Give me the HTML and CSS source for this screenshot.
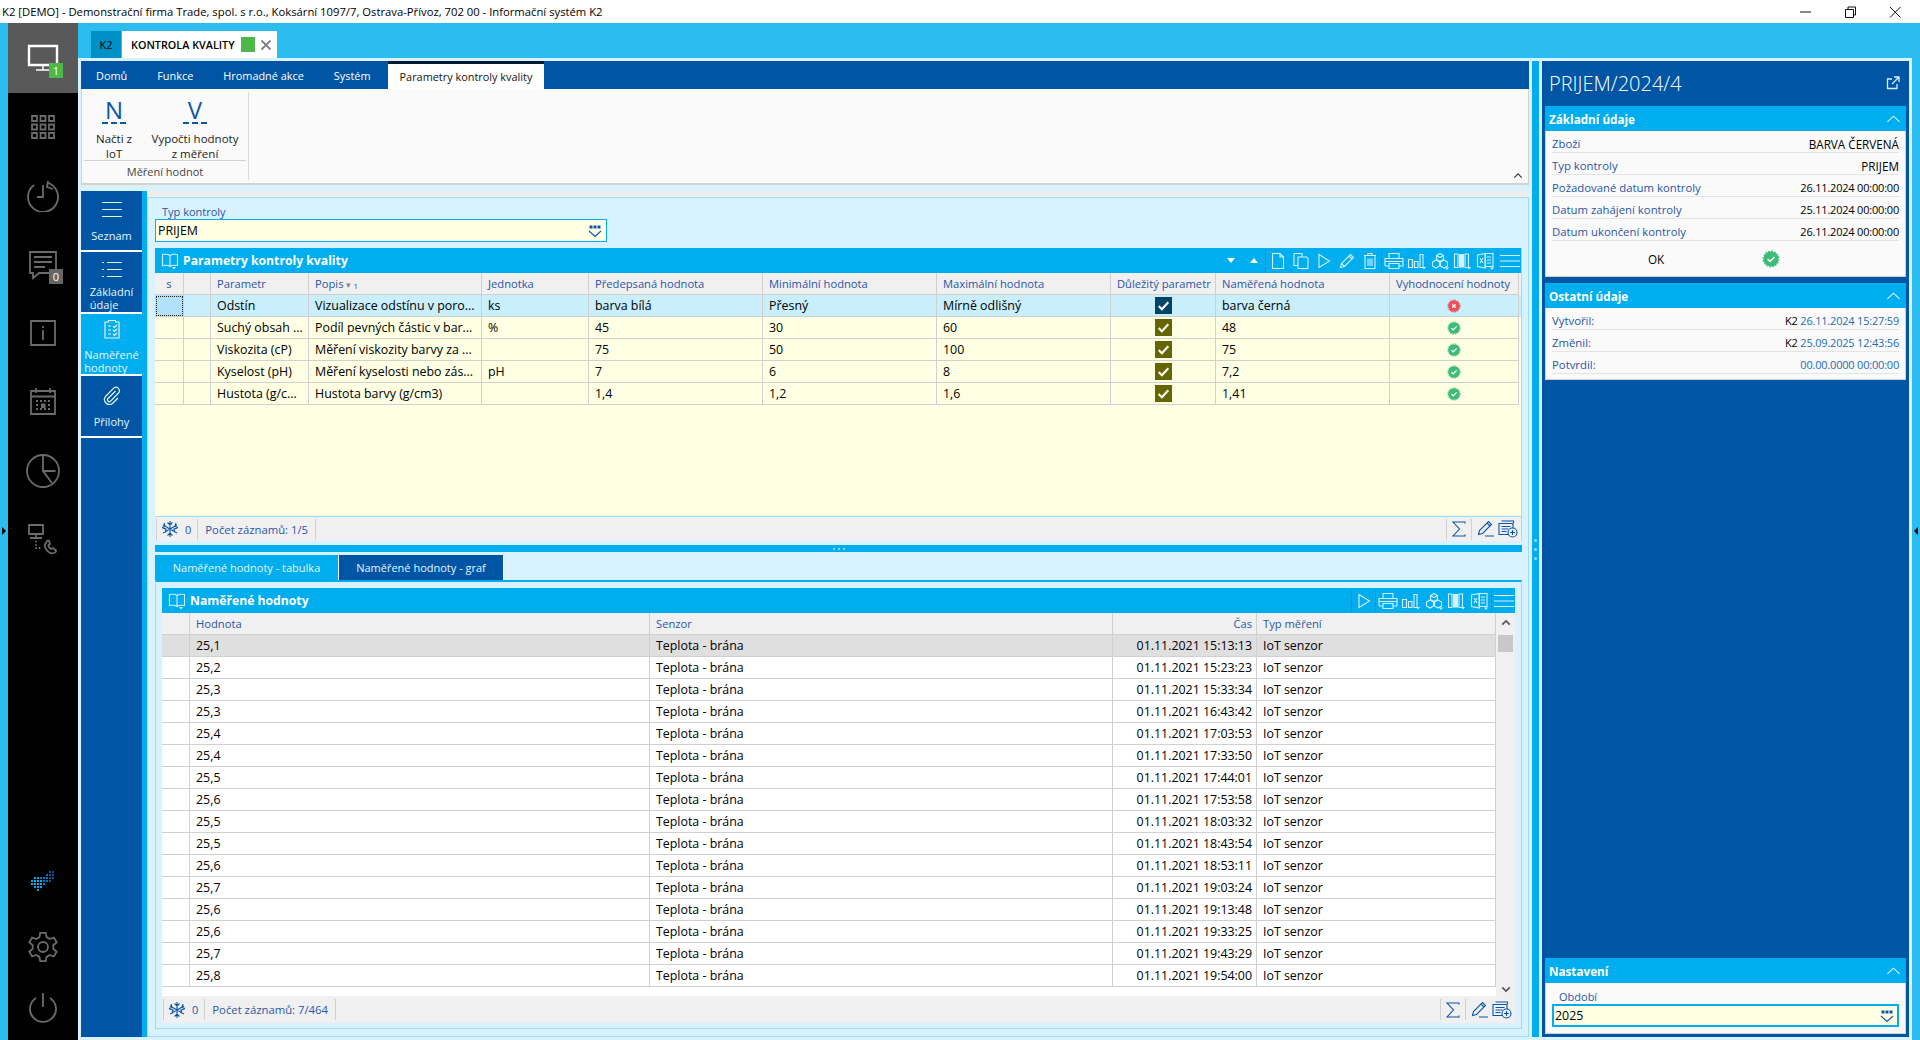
FILE: index.html
```html
<!DOCTYPE html>
<html lang="cs">
<head>
<meta charset="utf-8">
<title>K2</title>
<link rel="stylesheet" href="styles.css">
</head>
<body>
<svg class="defs" aria-hidden="true">
  <symbol id="i-doc" viewBox="0 0 18 18"><path d="M3.500 1.500h7.500l3.500 3.500v11.500h-11zM11 1.500v3.500h3.500"/></symbol>
  <symbol id="i-copy" viewBox="0 0 18 18"><path d="M6 13.500H2V1.500h8v3.500"/><path d="M6 5h8.500l1.500 1.500v10H6z"/></symbol>
  <symbol id="i-play" viewBox="0 0 18 18"><path d="M4 2.500l10.500 6.500L4 15.500z"/></symbol>
  <symbol id="i-pencil" viewBox="0 0 18 18"><path d="M2.500 15.500l1-4L12.500 2.500l3 3-9 9zM11 4l3 3M3.500 11.500l3 3"/></symbol>
  <symbol id="i-trash" viewBox="0 0 18 18"><path d="M3 3.500h12M7 3.500v-2h4v2M4 3.500v13h10v-13M7 6.500v7.500M9 6.500v7.500M11 6.500v7.500"/></symbol>
  <symbol id="i-print" viewBox="0 0 20 18"><path d="M5 6V1.500h10V6M1 14V6.500h18V14h-4M5 14H1M1 9.500h18"/><path d="M5 11.500h10v5H5z"/></symbol>
  <symbol id="i-chart" viewBox="0 0 20 18"><path d="M1.500 7.500h4v8h-4zM7.500 9.500h3.500v6h-3.500zM13 2.500h3v13h-3z"/><path class="solid" d="M15 15h4l-2 2.500z"/></symbol>
  <symbol id="i-cubes" viewBox="0 0 20 18"><path d="M10 1.500l3.500 2v4l-3.500 2-3.500-2v-4zM6 8l3.500 2v4L6 16l-3.500-2v-4zM14 8l3.500 2v4L14 16l-3.500-2v-4zM6.500 3.500l3.500 2 3.500-2"/><path class="solid" d="M15 15.500h4l-2 2.500z"/></symbol>
  <symbol id="i-cols" viewBox="0 0 20 18"><path d="M1.500 2h3.500v13.500H1.500zM12 2h3.500v13.500H12z"/><path class="solid" d="M6 2h5v13.500H6z"/><path class="solid" d="M14 15h4l-2 2.500z"/></symbol>
  <symbol id="i-excel" viewBox="0 0 20 18"><path d="M9 1.500h8v13H9zM11 5h4M11 8h4M11 11h4"/><path d="M1.500 3l8-1.500v14.500l-8-1.500zM4 6l3 5M7 6l-3 5"/><path class="solid" d="M14 15.500h4l-2 2.500z"/></symbol>
  <symbol id="i-menu" viewBox="0 0 20 18"><path d="M0 3.500h20M0 9h20M0 14.500h20"/></symbol>
  <symbol id="i-book" viewBox="0 0 18 18"><path d="M9 3.500C7 2 4 2 1.500 2.500v11C4 13 7 13 9 14.500 11 13 14 13 16.500 13.500v-11C14 2 11 2 9 3.500zM9 3.500v11"/><path class="solid" d="M11 15h4l-2 2.500z"/></symbol>
  <symbol id="i-snow" viewBox="0 0 18 18"><path d="M9 1v16M2 5l14 8M16 5L2 13M6.500 2.500L9 5l2.500-2.500M6.500 15.500L9 13l2.500 2.500M1.500 8l3.500 1-1 3.500M16.500 8L13 9l1 3.500M3 3l1 3.500L1 7.500M15 3l-1 3.500 3 1"/></symbol>
  <symbol id="i-sigma" viewBox="0 0 18 18"><path d="M15 3.500V2H3l6.500 7L3 16h12v-1.500"/></symbol>
  <symbol id="i-edit" viewBox="0 0 18 18"><path d="M1.500 14.500l1-4L11.500 1.500l3 3-9 9zM10 3l3 3M8 16h9"/></symbol>
  <symbol id="i-add" viewBox="0 0 20 18"><path d="M3.500 1h12v2M1 3.500h14v11H1zM3.500 6.500h9M3.500 9h7M3.500 11.500h5"/><circle class="white" cx="14.500" cy="12.500" r="4.500"/><path d="M14.500 10v5M12 12.500h5"/></symbol>
  <symbol id="i-ok" viewBox="0 0 16 16"><circle class="okfill" cx="8" cy="8" r="6.700"/><circle class="okteeth" cx="8" cy="8" r="7"/><path class="mark" d="M5 8.200l2.100 2L11 6.200"/></symbol>
  <symbol id="i-bad" viewBox="0 0 16 16"><circle class="badfill" cx="8" cy="8" r="6.700"/><circle class="badteeth" cx="8" cy="8" r="7"/><path class="mark" d="M6 6l4 4M10 6l-4 4"/></symbol>
  <symbol id="i-check" viewBox="0 0 16 16"><path class="mark big" d="M3.500 8.500l3 3 6-6.500"/></symbol>
  <symbol id="i-combo" viewBox="0 0 14 14"><path class="solid" d="M1.500 1.500h3v3h-3zM5.500 1.500h3v3h-3zM9.500 1.500h3v3h-3z"/><path d="M1 7l6 5.500L13 7"/></symbol>
</svg>

<header class="titlebar">
  <span class="title">K2 [DEMO] - Demonstrační firma Trade, spol. s r.o., Koksární 1097/7, Ostrava-Přívoz, 702 00 - Informační systém K2</span>
  <div class="winctl">
    <svg class="w" viewBox="0 0 14 14"><path d="M2 7h11"/></svg>
    <svg class="w" viewBox="0 0 14 14"><path d="M2.500 4.500h8v8h-8zM5 4.500V2h7.500v8h-2"/></svg>
    <svg class="w" viewBox="0 0 14 14"><path d="M2 2l10.500 10.500M12.500 2L2 12.500"/></svg>
  </div>
</header>

<div class="app">
  <span class="edge-arrow left"></span>
  <span class="edge-arrow right"></span>
  <aside class="rail">
    <div class="rail-active">
      <svg class="rail-ico white-ico" viewBox="0 0 32 32"><path d="M2 5h28v19H2zM16 24v5M9 29h14"/><path class="thick" d="M2 5h28v19H2z"/></svg>
      <span class="badge green">1</span>
    </div>
    <div class="rail-slot"><svg class="rail-ico" viewBox="0 0 32 32"><path d="M5 5h5v5H5zM13.500 5h5v5h-5zM22 5h5v5h-5zM5 13.500h5v5H5zM13.500 13.500h5v5h-5zM22 13.500h5v5h-5zM5 22h5v5H5zM13.500 22h5v5h-5zM22 22h5v5h-5z"/></svg></div>
    <div class="rail-slot"><svg class="rail-ico" viewBox="0 0 32 32"><path d="M20 2.500A15 15 0 1 1 7 5M16 5v12h-6M21 1l-1 6 6 2" /></svg></div>
    <div class="rail-slot"><svg class="rail-ico" viewBox="0 0 32 32"><path d="M3 3h26v21H12l-6 5v-5H3zM7 8h18M7 13h18M7 18h11"/></svg><span class="badge grey">0</span></div>
    <div class="rail-slot"><svg class="rail-ico" viewBox="0 0 32 32"><path d="M4 4h24v24H4zM16 13v10M16 9v2"/></svg></div>
    <div class="rail-slot"><svg class="rail-ico" viewBox="0 0 32 32"><path d="M4 5h24v23H4zM4 10.500h24M9 2v5M23 2v5M9 15h2M13 15h2M17 15h2M21 15h2M9 19h2M21 19h2M9 23h2M13 23h2M17 23h2M21 23h2"/><path class="solid" d="M14 17.500h4.500V22H14z"/></svg></div>
    <div class="rail-slot"><svg class="rail-ico big" viewBox="0 0 36 36"><circle cx="18" cy="18" r="16"/><path d="M18 2v16l12.500 0M18 18l9 12"/></svg></div>
    <div class="rail-slot"><svg class="rail-ico" viewBox="0 -1 32 32"><path d="M2 1h14v9H2zM9 10v4M3 14h12"/><path class="dots" d="M9 17v7h6"/><path d="M19 19c-1.500 1-2 3 0 6s5 5 8 4c2-.7 2.500-2 1.500-3l-2.500-2-2 1c-1-.5-2.500-2.500-2.500-4l1.500-1-1-3c-1-1-2-.5-3 2z" /></svg></div>
    <div class="rail-fill"></div>
    <div class="rail-logo">
      <svg class="logo" viewBox="0 0 24 22">
        <path class="d1" d="M0 9h2v2H0zM3 6h2v2H3zM3 9h2v2H3zM3 12h2v2H3zM0 12h2v2H0zM3 15h2v2H3zM6 6h2v2H6zM6 9h2v2H6zM6 12h2v2H6zM6 15h2v2H6zM6 18h2v2H6zM9 9h2v2H9zM9 12h2v2H9zM9 15h2v2H9z"/>
        <path class="d2" d="M9 6h2v2H9zM12 6h2v2h-2zM12 9h2v2h-2zM12 12h2v2h-2zM15 3h2v2h-2zM15 6h2v2h-2zM15 9h2v2h-2z"/>
        <path class="d3" d="M18 0h2v2h-2zM18 3h2v2h-2zM18 6h2v2h-2zM18 9h2v2h-2zM21 0h2v2h-2zM21 3h2v2h-2zM21 6h2v2h-2z"/>
      </svg>
    </div>
    <div class="rail-slot low"><svg class="rail-ico" viewBox="0 0 32 32"><path d="M19.600 6.100L18.800 1.800H13.200L12.400 6.100L9.300 8L5.100 6.500L2.300 11.300L5.700 14.200V17.800L2.300 20.700L5.100 25.500L9.300 24L12.400 25.900L13.200 30.200H18.800L19.600 25.900L22.700 24L26.900 25.500L29.700 20.700L26.300 17.800V14.200L29.700 11.300L26.900 6.500L22.700 8z"/><circle cx="16" cy="16" r="5"/></svg></div>
    <div class="rail-slot low"><svg class="rail-ico" viewBox="0 0 32 32"><path d="M9 6a13 13 0 1 0 14 0M16 1v14"/></svg></div>
  </aside>

  <div class="desk">
    <div class="tabstrip">
      <span class="tab-k2">K2</span>
      <div class="tab-doc">
        <span class="tab-name">KONTROLA KVALITY</span>
        <span class="tab-state"></span>
        <svg class="tab-close" viewBox="0 0 12 12"><path d="M1.500 1.500l9 9M10.500 1.500l-9 9"/></svg>
      </div>
    </div>

    <div class="workspace">
      <main class="main">
        <nav class="rtabs">
          <span class="rtab">Domů</span>
          <span class="rtab">Funkce</span>
          <span class="rtab">Hromadné akce</span>
          <span class="rtab">Systém</span>
          <span class="rtab active">Parametry kontroly kvality</span>
        </nav>
        <section class="ribbon">
          <div class="rgroup">
            <div class="rbtns">
              <div class="rbtn narrow"><span class="rletter">N</span><span class="rlabel">Načti z<br>IoT</span></div>
              <div class="rbtn wide"><span class="rletter">V</span><span class="rlabel">Vypočti hodnoty<br>z měření</span></div>
            </div>
            <div class="rgroup-name">Měření hodnot</div>
          </div>
          <svg class="ribbon-caret" viewBox="0 0 12 8"><path d="M1.500 6.500L6 2l4.500 4.500"/></svg>
        </section>

        <div class="body">
          <nav class="sidenav">
            <div class="nitem list">
              <svg class="nico" viewBox="0 0 22 20"><path d="M1 2.500h20M1 9.500h20M1 16.500h20"/></svg>
              <span class="nlabel">Seznam</span>
            </div>
            <div class="nitem basic">
              <svg class="nico" viewBox="0 0 22 20"><path d="M6 2.500h15M6 9.500h15M6 16.500h15M1 2.500h2M1 9.500h2M1 16.500h2"/></svg>
              <span class="nlabel">Základní<br>údaje</span>
            </div>
            <div class="nitem on">
              <svg class="nico" viewBox="0 0 22 20"><path d="M4 3h3.500V1.500h7V3H18v16H4zM7 7h3M7 11h3M7 15h3M12 7l1.500 1.500L16 6M12 11l1.500 1.500L16 10M12 15l1.500 1.500L16 14"/></svg>
              <span class="nlabel">Naměřené<br>hodnoty</span>
            </div>
            <div class="nitem clip">
              <svg class="nico" viewBox="0 0 22 20"><path d="M14.500 6L7 13.500a1.800 1.800 0 0 0 2.600 2.600L17.500 8a3.400 3.400 0 0 0-4.800-4.800L4.500 11.500a5 5 0 0 0 7 7L17 13"/></svg>
              <span class="nlabel">Přílohy</span>
            </div>
          </nav>
          <div class="navedge"></div>

          <div class="content">
            <div class="pane">
              <label class="flabel">Typ kontroly</label>
              <div class="combo main-combo"><span>PRIJEM</span><svg class="combo-ico" viewBox="0 0 14 14"><use href="#i-combo"/></svg></div>

              <section class="grid top">
                <div class="gbar">
                  <svg class="bookico tb"><use href="#i-book"/></svg>
                  <span class="gtitle">Parametry kontroly kvality</span>
                  <div class="tools">
                    <span class="tri down"></span>
                    <span class="tri up"></span>
                    <span class="tsep"></span>
                    <svg class="tb"><use href="#i-doc"/></svg>
                    <svg class="tb"><use href="#i-copy"/></svg>
                    <svg class="tb"><use href="#i-play"/></svg>
                    <svg class="tb"><use href="#i-pencil"/></svg>
                    <svg class="tb"><use href="#i-trash"/></svg>
                    <span class="tsep"></span>
                    <svg class="tb w20"><use href="#i-print"/></svg>
                    <svg class="tb w20"><use href="#i-chart"/></svg>
                    <svg class="tb w20"><use href="#i-cubes"/></svg>
                    <svg class="tb w20"><use href="#i-cols"/></svg>
                    <svg class="tb w20"><use href="#i-excel"/></svg>
                    <span class="tsep"></span>
                    <svg class="tb w20"><use href="#i-menu"/></svg>
                  </div>
                </div>
                <div class="gtable yellow">
                  <div class="row head c1">
                    <span class="center">s</span><span></span><span>Parametr</span><span>Popis <i class="sort">▾</i><i class="sortn">1</i></span><span>Jednotka</span><span>Předepsaná hodnota</span><span>Minimální hodnota</span><span>Maximální hodnota</span><span>Důležitý parametr</span><span>Naměřená hodnota</span><span>Vyhodnocení hodnoty</span>
                  </div>
                  <div class="row c1 sel">
                    <span class="focus"></span><span></span><span>Odstín</span><span>Vizualizace odstínu v poro...</span><span>ks</span><span>barva bílá</span><span>Přesný</span><span>Mírně odlišný</span><span class="center"><b class="chk navy"><svg><use href="#i-check"/></svg></b></span><span>barva černá</span><span class="center"><svg class="st"><use href="#i-bad"/></svg></span>
                  </div>
                  <div class="row c1">
                    <span></span><span></span><span>Suchý obsah ...</span><span>Podíl pevných částic v bar...</span><span>%</span><span>45</span><span>30</span><span>60</span><span class="center"><b class="chk"><svg><use href="#i-check"/></svg></b></span><span>48</span><span class="center"><svg class="st"><use href="#i-ok"/></svg></span>
                  </div>
                  <div class="row c1">
                    <span></span><span></span><span>Viskozita (cP)</span><span>Měření viskozity barvy za ...</span><span></span><span>75</span><span>50</span><span>100</span><span class="center"><b class="chk"><svg><use href="#i-check"/></svg></b></span><span>75</span><span class="center"><svg class="st"><use href="#i-ok"/></svg></span>
                  </div>
                  <div class="row c1">
                    <span></span><span></span><span>Kyselost (pH)</span><span>Měření kyselosti nebo zás...</span><span>pH</span><span>7</span><span>6</span><span>8</span><span class="center"><b class="chk"><svg><use href="#i-check"/></svg></b></span><span>7,2</span><span class="center"><svg class="st"><use href="#i-ok"/></svg></span>
                  </div>
                  <div class="row c1">
                    <span></span><span></span><span>Hustota (g/c...</span><span>Hustota barvy (g/cm3)</span><span></span><span>1,4</span><span>1,2</span><span>1,6</span><span class="center"><b class="chk"><svg><use href="#i-check"/></svg></b></span><span>1,41</span><span class="center"><svg class="st"><use href="#i-ok"/></svg></span>
                  </div>
                </div>
                <div class="status">
                  <span class="sgroup"><svg class="sico"><use href="#i-snow"/></svg><span class="scount">0</span></span>
                  <span class="sgroup text">Počet záznamů: 1/5</span>
                  <span class="sfill"></span>
                  <span class="sgroup ic"><svg class="sico"><use href="#i-sigma"/></svg></span>
                  <svg class="sico"><use href="#i-edit"/></svg>
                  <svg class="sico w20"><use href="#i-add"/></svg>
                </div>
              </section>

              <div class="hsplit"><i></i><i></i><i></i></div>

              <div class="subtabs">
                <span class="stab on">Naměřené hodnoty - tabulka</span>
                <span class="stab">Naměřené hodnoty - graf</span>
              </div>

              <div class="tabbox">
                <section class="grid lower">
                  <div class="gbar">
                    <svg class="bookico tb"><use href="#i-book"/></svg>
                    <span class="gtitle">Naměřené hodnoty</span>
                    <div class="tools">
                      <span class="tsep"></span>
                      <svg class="tb"><use href="#i-play"/></svg>
                      <span class="tsep"></span>
                      <svg class="tb w20"><use href="#i-print"/></svg>
                      <svg class="tb w20"><use href="#i-chart"/></svg>
                      <svg class="tb w20"><use href="#i-cubes"/></svg>
                      <svg class="tb w20"><use href="#i-cols"/></svg>
                      <svg class="tb w20"><use href="#i-excel"/></svg>
                      <span class="tsep"></span>
                      <svg class="tb w20"><use href="#i-menu"/></svg>
                    </div>
                  </div>
                  <div class="gbody">
                    <div class="gtable white">
                      <div class="row head c2"><span></span><span>Hodnota</span><span>Senzor</span><span class="right">Čas</span><span>Typ měření</span></div>
                      <div class="row c2 cur"><span></span><span>25,1</span><span>Teplota - brána</span><span class="right">01.11.2021 15:13:13</span><span>IoT senzor</span></div>
                      <div class="row c2"><span></span><span>25,2</span><span>Teplota - brána</span><span class="right">01.11.2021 15:23:23</span><span>IoT senzor</span></div>
                      <div class="row c2"><span></span><span>25,3</span><span>Teplota - brána</span><span class="right">01.11.2021 15:33:34</span><span>IoT senzor</span></div>
                      <div class="row c2"><span></span><span>25,3</span><span>Teplota - brána</span><span class="right">01.11.2021 16:43:42</span><span>IoT senzor</span></div>
                      <div class="row c2"><span></span><span>25,4</span><span>Teplota - brána</span><span class="right">01.11.2021 17:03:53</span><span>IoT senzor</span></div>
                      <div class="row c2"><span></span><span>25,4</span><span>Teplota - brána</span><span class="right">01.11.2021 17:33:50</span><span>IoT senzor</span></div>
                      <div class="row c2"><span></span><span>25,5</span><span>Teplota - brána</span><span class="right">01.11.2021 17:44:01</span><span>IoT senzor</span></div>
                      <div class="row c2"><span></span><span>25,6</span><span>Teplota - brána</span><span class="right">01.11.2021 17:53:58</span><span>IoT senzor</span></div>
                      <div class="row c2"><span></span><span>25,5</span><span>Teplota - brána</span><span class="right">01.11.2021 18:03:32</span><span>IoT senzor</span></div>
                      <div class="row c2"><span></span><span>25,5</span><span>Teplota - brána</span><span class="right">01.11.2021 18:43:54</span><span>IoT senzor</span></div>
                      <div class="row c2"><span></span><span>25,6</span><span>Teplota - brána</span><span class="right">01.11.2021 18:53:11</span><span>IoT senzor</span></div>
                      <div class="row c2"><span></span><span>25,7</span><span>Teplota - brána</span><span class="right">01.11.2021 19:03:24</span><span>IoT senzor</span></div>
                      <div class="row c2"><span></span><span>25,6</span><span>Teplota - brána</span><span class="right">01.11.2021 19:13:48</span><span>IoT senzor</span></div>
                      <div class="row c2"><span></span><span>25,6</span><span>Teplota - brána</span><span class="right">01.11.2021 19:33:25</span><span>IoT senzor</span></div>
                      <div class="row c2"><span></span><span>25,7</span><span>Teplota - brána</span><span class="right">01.11.2021 19:43:29</span><span>IoT senzor</span></div>
                      <div class="row c2"><span></span><span>25,8</span><span>Teplota - brána</span><span class="right">01.11.2021 19:54:00</span><span>IoT senzor</span></div>
                    </div>
                    <div class="scroll">
                      <svg class="sarrow" viewBox="0 0 12 8"><path d="M1.500 6.500L6 2l4.500 4.500"/></svg>
                      <span class="thumb"></span>
                      <span class="sfill"></span>
                      <svg class="sarrow" viewBox="0 0 12 8"><path d="M1.500 1.500L6 6l4.500-4.500"/></svg>
                    </div>
                  </div>
                  <div class="status tall">
                    <span class="sgroup"><svg class="sico"><use href="#i-snow"/></svg><span class="scount">0</span></span>
                    <span class="sgroup text">Počet záznamů: 7/464</span>
                    <span class="sfill"></span>
                    <span class="sgroup ic"><svg class="sico"><use href="#i-sigma"/></svg></span>
                    <svg class="sico"><use href="#i-edit"/></svg>
                    <svg class="sico w20"><use href="#i-add"/></svg>
                  </div>
                </section>
              </div>
            </div>
          </div>
        </div>
      </main>

      <div class="vsplit"><div class="vbar"><i></i><i></i><i></i></div></div>

      <aside class="side">
        <div class="side-head">
          <span class="side-title">PRIJEM/2024/4</span>
          <svg class="popout" viewBox="0 0 14 14"><path d="M6 3H1.500v9.500H11V8M8 1h5v5M13 1L6 8"/></svg>
        </div>
        <section class="card">
          <div class="card-head"><span>Základní údaje</span><svg class="chev" viewBox="0 0 16 10"><path d="M1.500 8L8 2l6.500 6"/></svg></div>
          <div class="card-body">
            <div class="kv"><span class="k">Zboží</span><span class="v">BARVA ČERVENÁ</span></div>
            <div class="kv"><span class="k">Typ kontroly</span><span class="v">PRIJEM</span></div>
            <div class="kv"><span class="k">Požadované datum kontroly</span><span class="v d">26.11.2024 00:00:00</span></div>
            <div class="kv"><span class="k">Datum zahájení kontroly</span><span class="v d">25.11.2024 00:00:00</span></div>
            <div class="kv"><span class="k">Datum ukončení kontroly</span><span class="v d">26.11.2024 00:00:00</span></div>
            <div class="okrow"><span class="oktext">OK</span><svg class="st big"><use href="#i-ok"/></svg></div>
          </div>
        </section>
        <section class="card">
          <div class="card-head"><span>Ostatní údaje</span><svg class="chev" viewBox="0 0 16 10"><path d="M1.500 8L8 2l6.500 6"/></svg></div>
          <div class="card-body other">
            <div class="kv"><span class="k">Vytvořil:</span><span class="v d">K2 <em>26.11.2024 15:27:59</em></span></div>
            <div class="kv"><span class="k">Změnil:</span><span class="v d">K2 <em>25.09.2025 12:43:56</em></span></div>
            <div class="kv"><span class="k">Potvrdil:</span><span class="v d"><em>00.00.0000 00:00:00</em></span></div>
          </div>
        </section>
        <div class="side-fill"></div>
        <section class="card last">
          <div class="card-head"><span>Nastavení</span><svg class="chev" viewBox="0 0 16 10"><path d="M1.500 8L8 2l6.500 6"/></svg></div>
          <div class="card-body setting">
            <label class="flabel">Období</label>
            <div class="combo thick-combo"><span>2025</span><svg class="combo-ico" viewBox="0 0 14 14"><use href="#i-combo"/></svg></div>
          </div>
        </section>
      </aside>
    </div>
  </div>
</div>
</body>
</html>
```

FILE: styles.css
```css
* { box-sizing: border-box; }
html, body { margin: 0; height: 1040px; overflow: hidden; }
body {
  font-family: "Open Sans", "Noto Sans", "Liberation Sans", sans-serif;
  font-size: 11px;
  color: #000;
  display: flex;
  flex-direction: column;
  background: #2bbcf0;
}
.defs { position: absolute; width: 0; height: 0; }
svg { display: block; fill: none; stroke: currentColor; stroke-width: 1.1; flex: none; }
.solid { fill: currentColor; stroke: none; }
.white { fill: #f0f0f0; }
.dots { stroke-dasharray: 1.6 1.6; }
.okfill { fill: #3dbb78; stroke: none; }
.okteeth { stroke: #3dbb78; stroke-width: 1; stroke-dasharray: 1.5 1.25; }
.badfill { fill: #ef5058; stroke: none; }
.badteeth { stroke: #ef5058; stroke-width: 1; stroke-dasharray: 1.5 1.25; }
.mark { stroke: #fff; stroke-width: 1.4; }
.mark.big { stroke-width: 2; }

.titlebar { height: 23px; background: #fff; display: flex; align-items: center; padding-left: 2px; flex: none; }
.title { font-size: 11.27px; white-space: nowrap; }
.winctl { margin-left: auto; display: flex; gap: 31px; padding-right: 18px; }
.w { width: 14px; height: 14px; stroke: #111; stroke-width: 1; }

.app { flex: 1; display: flex; padding-left: 8px; position: relative; min-height: 0; }
.edge-arrow { position: absolute; top: 504px; width: 0; height: 0; border-top: 4px solid transparent; border-bottom: 4px solid transparent; }
.edge-arrow.left { left: 2px; border-left: 4px solid #000; }
.edge-arrow.right { right: 2px; border-right: 4px solid #000; }

.rail { width: 70px; background: #000; display: flex; flex-direction: column; color: #6b6b6b; flex: none; padding-bottom: 2px; }
.rail-active { height: 70px; background: #595959; display: flex; align-items: center; justify-content: center; color: #fff; position: relative; padding-bottom: 3px; }
.rail-slot { height: 68.7px; display: flex; align-items: center; justify-content: center; position: relative; flex: none; }
.rail-ico { width: 32px; height: 32px; stroke-width: 1.8; }
.rail-ico.big { width: 36px; height: 36px; }
.white-ico { stroke-width: 1.4; }
.thick { stroke-width: 2.4; }
.badge { position: absolute; width: 14px; height: 15px; font-size: 11px; color: #fff; text-align: center; line-height: 15px; left: 41px; }
.badge.green { background: #4db848; top: 40px; }
.badge.grey { background: #666; left: 41px; top: 39px; }
.rail-fill { flex: 1; }
.rail-logo { height: 50px; margin-bottom: 9px; display: flex; align-items: center; justify-content: center; flex: none; }
.logo { width: 24px; height: 22px; stroke: none; }
.d1 { fill: #00aeef; } .d2 { fill: #0078c8; } .d3 { fill: #0a4f9c; }
.rail-slot.low { height: 61px; }

.desk { flex: 1; display: flex; flex-direction: column; min-width: 0; }
.tabstrip { height: 35px; padding: 8px 0 0 13px; display: flex; gap: 1px; flex: none; }
.tab-k2 { width: 30px; background: #0090c8; display: flex; align-items: center; justify-content: center; font-size: 11px; }
.tab-doc { width: 155px; background: #fff; display: flex; align-items: center; padding-left: 9px; }
.tab-name { font-weight: 600; font-size: 10.8px; width: 110px; white-space: nowrap; }
.tab-state { width: 14px; height: 15px; background: #4db848; }
.tab-close { width: 12px; height: 12px; margin-left: 5px; stroke: #808080; stroke-width: 1.8; }

.workspace { flex: 1; min-height: 0; display: flex; background: #d9f2ff; padding: 3px; margin-right: 8px; }

.main { width: 1448px; display: flex; flex-direction: column; flex: none; }
.rtabs { height: 28px; background: #0056a5; display: flex; color: #fff; flex: none; }
.rtab { padding: 0 15px; display: flex; align-items: center; font-size: 10.9px; white-space: nowrap; }
.rtab.active { margin-left: 2px; width: 156px; padding: 0 12px; color: #111; background: #fff; border-top: 3px solid #001a33; }

.ribbon { height: 96px; background: #fafafa; border: 1px solid #d2d2d2; border-width: 0 1px 2px 1px; padding: 3px 0 3px 2px; display: flex; position: relative; color: #333; flex: none; }
.rgroup { width: 165px; border-right: 1px solid #d9d9d9; padding-right: 2px; display: flex; flex-direction: column; }
.rbtns { display: flex; height: 69px; border-bottom: 1px solid #d2d2d2; padding-top: 3px; }
.rbtn { display: flex; flex-direction: column; align-items: center; text-align: center; }
.rbtn.narrow { width: 60px; }
.rbtn.wide { width: 102px; }
.rletter { font-size: 24px; line-height: 30px; height: 29px; width: 24px; color: #0a56a8; border-bottom: 2px dashed #0a56a8; font-weight: 400; }
.rlabel { font-size: 11.5px; line-height: 15px; margin-top: 7px; white-space: nowrap; color: #222; }
.rgroup-name { text-align: center; font-size: 11px; line-height: 21px; color: #444; }
.ribbon-caret { position: absolute; right: 5px; bottom: 4px; width: 10px; height: 7px; stroke: #333; stroke-width: 1.3; }

.body { flex: 1; min-height: 0; display: flex; margin-top: 6px; }
.sidenav { width: 61px; background: #0056a5; color: #fff; flex: none; }
.nitem { height: 62px; border-bottom: 2px solid #fff; display: flex; flex-direction: column; align-items: center; text-align: center; line-height: 13px; font-size: 11px; color: #e6f6ff; }
.nico { width: 22px; height: 20px; stroke-width: 1.2; color: #e6f6ff; }
.nitem.list { height: 61px; padding-top: 9px; }
.nitem.list .nico { margin-bottom: 9px; }
.nitem.basic { padding-top: 8px; }
.nitem.basic .nico { margin-bottom: 5px; }
.nitem.on { background: #00aeef; padding-top: 5px; }
.nitem.on .nico { margin-bottom: 9px; }
.nitem.clip { padding-top: 9px; }
.nitem.clip .nico { margin-bottom: 10px; }
.nlabel { white-space: nowrap; text-align: left; }
.navedge { width: 5px; background: #00aeef; flex: none; }

.content { flex: 1; min-width: 0; padding-top: 6px; background: #eeeeee; display: flex; }
.pane { flex: 1; min-width: 0; display: flex; flex-direction: column; background: #d9f2ff; border: 1px solid #9edcf7; padding: 7px 6px 7px 7px; }
.flabel { display: block; height: 14px; line-height: 14px; padding-left: 7px; color: #2a55a8; font-size: 11px; }
.combo { display: flex; align-items: center; justify-content: space-between; background: #ffffe4; border: 1px solid #00aeef; padding: 0 2px; }
.main-combo { width: 452px; height: 23px; margin-bottom: 6px; flex: none; }
.combo-ico { width: 14px; height: 14px; color: #0a56a8; margin-right: 2px; }
.combo span { font-size: 12.4px; }

.grid { display: flex; flex-direction: column; flex: none; }
.grid.top { height: 293px; border-right: 1px solid #9edcf7; }
.gbar { height: 25px; background: #00aeef; color: #fff; display: flex; align-items: center; padding-left: 3px; flex: none; }
.gtitle { font-weight: 700; font-size: 12.2px; margin-left: 2px; }
.bookico { color: #fff; }
.tools { margin-left: auto; display: flex; align-items: center; }
.tb { width: 18px; height: 18px; margin: 0 2.5px; color: #d4f1ff; }
.tb.w20 { width: 20px; margin: 0 1.5px; }
.tsep { width: 1px; height: 22px; background: #0695cf; }
.tri { width: 23px; display: flex; justify-content: center; }
.tri::after { content: ""; border-left: 4.5px solid transparent; border-right: 4.5px solid transparent; }
.tri.down::after { border-top: 5px solid #fff; }
.tri.up::after { border-bottom: 5px solid #fff; }

.gtable { flex: 1; min-height: 0; min-width: 0; }
.gtable.yellow { background: #ffffe4; }
.gtable.white { background: #fff; }
.row { display: grid; height: 22px; font-size: 12.4px; }
.row.c1 { grid-template-columns: 29px 27px 98px 173px 107px 174px 174px 174px 105px 174px 129px; }
.row.c2 { grid-template-columns: 28px 460px 463px 144px 239px; }
.row > span { border-right: 1px solid #d0d0d0; border-bottom: 1px solid #d0d0d0; padding: 0 4px 0 6px; line-height: 21px; white-space: nowrap; overflow: hidden; }
.row > span.center { padding: 0; display: flex; align-items: center; justify-content: center; }
.row.head { background: #f0f0f0; color: #2a55a8; font-size: 11.2px; }
.row.sel { background: #c9eefc; }
.row.cur { background: #dfdfdf; }
.right { text-align: right; }
.focus { background: #b2e2fb; outline: 1px dotted #222; outline-offset: -2px; }
.sort { font-style: normal; color: #888; font-size: 9px; }
.sortn { font-style: normal; font-size: 8px; margin-left: 2px; vertical-align: -1px; }
.chk { display: block; width: 17px; height: 17px; background: #666600; }
.chk.navy { background: #004466; }
.chk svg { width: 17px; height: 17px; }
.st { width: 14px; height: 14px; }

.status { height: 25px; background: #f0f0f0; border-top: 1px solid #9edcf7; display: flex; align-items: center; color: #2a55a8; flex: none; padding-left: 1px; }
.status.tall { height: 27px; border-top: 0; padding: 1px 0 1px 1px; }
.sgroup { display: flex; align-items: center; height: 21px; border-left: 1px solid #d0d0d0; padding: 0 6px 0 4px; }
.sgroup.text { padding: 0 7px; font-size: 11.3px; white-space: nowrap; }
.sgroup.text + .sfill { border-left: 1px solid #d0d0d0; height: 21px; }
.sgroup.ic { padding: 0 3px; border-right: 1px solid #d0d0d0; margin-right: 5px; }
.scount { margin-left: 6px; }
.sfill { flex: 1; }
.sico { width: 18px; height: 18px; color: #0a56a8; }
.sico.w20 { width: 20px; margin: 0 3px 0 3px; }

.hsplit { height: 7px; margin: 4px 0 3px; background: #00aeef; display: flex; justify-content: center; align-items: center; gap: 3px; flex: none; }
.hsplit i { width: 2px; height: 2px; background: #7fd6f7; }
.subtabs { height: 25px; display: flex; flex: none; }
.stab { display: flex; align-items: center; justify-content: center; color: #e6f6ff; font-size: 11px; background: #0056a5; width: 165px; border-right: 1px solid #fff; }
.stab.on { background: #00aeef; width: 184px; }
.tabbox { flex: 1; min-height: 0; border: 1px solid #9edcf7; border-top: 2px solid #00aeef; padding: 6px 6px 5px; display: flex; flex-direction: column; }
.grid.lower { flex: 1; min-height: 0; }
.gbody { flex: 1; min-height: 0; display: flex; background: #fff; }
.scroll { width: 19px; background: #f0f0f0; display: flex; flex-direction: column; align-items: center; padding: 6px 0 3px; color: #555; flex: none; }
.sarrow { width: 10px; height: 7px; stroke-width: 2; }
.thumb { width: 15px; height: 17px; background: #c8c8c8; margin-top: 9px; }

.vsplit { width: 13px; padding: 0 3px; flex: none; }
.vbar { height: 100%; background: #00aeef; display: flex; flex-direction: column; align-items: center; justify-content: center; gap: 6px; }
.vbar i { width: 3px; height: 3px; border-radius: 50%; background: #8cdcf8; }

.side { width: 367px; background: #0056a5; display: flex; flex-direction: column; padding: 0 3px 3px; flex: none; }
.side-head { height: 45px; display: flex; align-items: center; justify-content: space-between; padding: 0 7px 0 4px; color: #fff; flex: none; }
.side-title { font-size: 20px; font-weight: 300; color: #fff; }
.popout { width: 14px; height: 14px; stroke-width: 1.3; color: #d4f1ff; margin: -2px -1px 0 0; }
.card { margin-bottom: 6px; flex: none; }
.card.last { margin-bottom: 0; }
.card-head { height: 25px; background: #00aeef; color: #fff; font-weight: 700; font-size: 11.7px; display: flex; align-items: center; justify-content: space-between; padding: 0 5px 0 4px; }
.chev { width: 15px; height: 10px; color: #d4f1ff; stroke-width: 1.2; }
.card-body { background: #fafafa; border: 1px solid #d2d2d2; border-top: 0; padding: 0 6px; }
.card-body.other { padding-bottom: 5px; }
.card-body.setting { height: 51px; padding-top: 7px; }
.kv { height: 22px; display: flex; justify-content: space-between; align-items: center; border-bottom: 1px solid #e4e4e4; font-size: 11.35px; padding: 4px 0 0; }
.k { color: #2a55a8; }
.v { font-size: 11.7px; }
.v.d { font-size: 11px; letter-spacing: -0.2px; }
.v em { font-style: normal; color: #1c6bb8; }
.okrow { height: 35px; display: flex; align-items: center; }
.oktext { width: 208px; text-align: center; font-size: 11.7px; }
.st.big { width: 18px; height: 18px; margin-left: 2px; }
.thick-combo { height: 23px; border-width: 2px; padding: 0 1px; }
.side-fill { flex: 1; }
```
